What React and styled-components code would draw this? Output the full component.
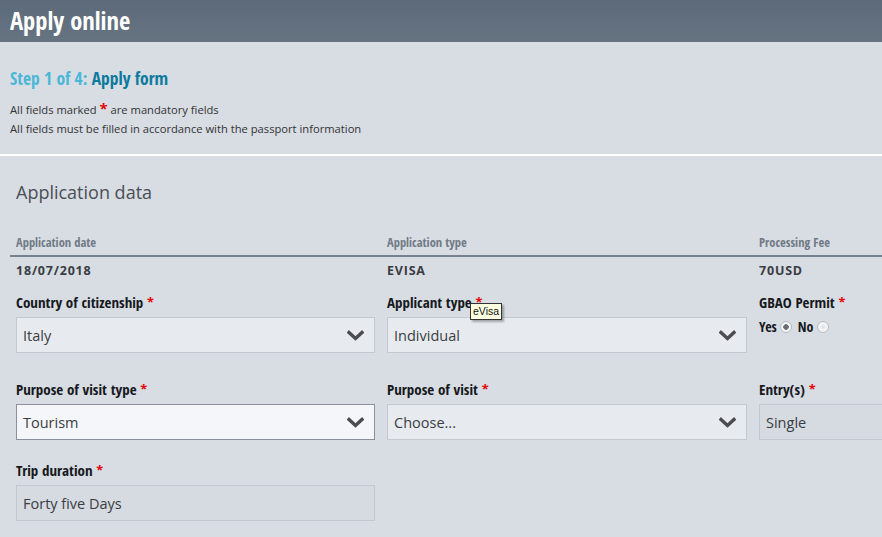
import React from "react";
import styled, { createGlobalStyle } from "styled-components";

const Global = createGlobalStyle`
  html, body { margin: 0; padding: 0; }
  body {
    background: #d8dce3;
    font-family: "Open Sans", "DejaVu Sans", sans-serif;
    overflow: hidden;
    width: 882px;
    height: 537px;
  }
`;

const cond = `"Liberation Sans Narrow", "Open Sans Condensed", "Open Sans", sans-serif`;

const Page = styled.div`
  width: 882px;
  overflow: hidden;
`;

const Header = styled.header`
  height: 42px;
  background: linear-gradient(#5d6a79, #667482);
  display: flex;
  align-items: center;
  padding-left: 10px;
  box-sizing: border-box;
`;

const Title = styled.h1`
  margin: 0;
  color: #fff;
  font-family: ${cond};
  font-weight: 700;
  font-size: 24.5px;
  margin-top: -2px;
`;

const Intro = styled.section`
  padding: 25px 10px 0;
  height: 114px;
  box-sizing: border-box;
  border-bottom: 2px solid #ffffff;
`;

const Step = styled.h2`
  margin: 0 0 10px;
  font-family: ${cond};
  font-weight: 700;
  font-size: 17.5px;
  color: #0b7a9c;
  line-height: 22px;
  span { color: #4bb7d7; }
`;

const Note = styled.p`
  margin: 0;
  font-size: 11.2px;
  line-height: 19px;
  color: #333;
`;

const Star = styled.span`
  color: #e20a0a;
  font-weight: 700;
  font-size: 15px;
`;

const Section = styled.section`
  padding: 24px 0 0 10px;
`;

const SectionTitle = styled.h3`
  margin: 0 0 31px 6px;
  font-weight: 400;
  font-size: 18px;
  color: #4a4f55;
  line-height: 24px;
`;

const MetaHead = styled.div`
  display: grid;
  grid-template-columns: 359px 360px 359px;
  column-gap: 12px;
  padding: 0 0 4px 6px;
  border-bottom: 2px solid #76828f;
`;

const MetaLabel = styled.div`
  font-family: ${cond};
  font-weight: 700;
  font-size: 12.5px;
  color: #707a86;
  line-height: 16px;
`;

const Grid = styled.div`
  display: grid;
  grid-template-columns: 359px 360px 359px;
  column-gap: 12px;
  padding-left: 6px;
`;

const MetaValue = styled.div`
  font-weight: 700;
  font-size: 12.5px;
  letter-spacing: 0.8px;
  color: #3a3d42;
  padding-top: 5px;
  height: 32px;
`;

const Field = styled.div`
  position: relative;
  height: ${(p) => p.$h || "87px"};
`;

const Label = styled.label`
  display: block;
  font-family: ${cond};
  font-weight: 700;
  font-size: 15px;
  color: #16191d;
  line-height: 17px;
  margin-bottom: 6px;
`;

const Box = styled.div`
  height: 36px;
  box-sizing: border-box;
  display: flex;
  align-items: center;
  justify-content: space-between;
  padding: 0 10px 0 6px;
  font-size: 14.5px;
  color: #3a3d42;
  background: ${(p) => (p.$focus ? "#f4f6f9" : p.$disabled ? "#d6dae1" : "#e7ebf0")};
  border: 1px solid ${(p) => (p.$focus ? "#8a919b" : "#c4c9d1")};
`;

const Chevron = () => (
  <svg width="17" height="11" viewBox="0 0 17 11">
    <path d="M2 2.5 L8.5 8.5 L15 2.5" fill="none" stroke="#4a4c50" strokeWidth="3.4" strokeLinecap="square" />
  </svg>
);

const Tooltip = styled.div`
  position: absolute;
  left: 83px;
  top: 9px;
  background: #ffffe1;
  border: 1px solid #333;
  box-shadow: 2px 2px 2px rgba(0, 0, 0, 0.3);
  font-family: "Liberation Sans", Arial, sans-serif;
  font-size: 10.5px;
  color: #111;
  padding: 1px 2px;
  line-height: 13px;
`;

const RadioRow = styled.div`
  display: flex;
  align-items: center;
  gap: 3px;
  font-family: ${cond};
  font-weight: 700;
  font-size: 14px;
  color: #16191d;
  margin-top: 2px;
`;

const Radio = styled.span`
  width: 12px;
  height: 12px;
  border-radius: 50%;
  box-sizing: border-box;
  border: 1px solid #b8bcc2;
  background: radial-gradient(circle, ${(p) => (p.$on ? "#6b6f75 0 2.5px" : "transparent 0 0")}, #f3f4f6 3px);
  margin-right: 3px;
`;

const Select = ({ value, focus }) => (
  <Box $focus={focus}>
    <span>{value}</span>
    <Chevron />
  </Box>
);

export default function App() {
  return (
    <Page>
      <Global />
      <Header>
        <Title>Apply online</Title>
      </Header>
      <Intro>
        <Step>
          <span>Step 1 of 4:</span> Apply form
        </Step>
        <Note>
          All fields marked <Star>*</Star> are mandatory fields
        </Note>
        <Note>All fields must be filled in accordance with the passport information</Note>
      </Intro>
      <Section>
        <SectionTitle>Application data</SectionTitle>
        <MetaHead>
          <MetaLabel>Application date</MetaLabel>
          <MetaLabel>Application type</MetaLabel>
          <MetaLabel>Processing Fee</MetaLabel>
        </MetaHead>
        <Grid>
          <MetaValue>18/07/2018</MetaValue>
          <MetaValue>EVISA</MetaValue>
          <MetaValue>70USD</MetaValue>

          <Field>
            <Label>
              Country of citizenship <Star>*</Star>
            </Label>
            <Select value="Italy" />
          </Field>
          <Field>
            <Label>
              Applicant type <Star>*</Star>
            </Label>
            <Select value="Individual" />
            <Tooltip>eVisa</Tooltip>
          </Field>
          <Field>
            <Label>
              GBAO Permit <Star>*</Star>
            </Label>
            <RadioRow>
              Yes <Radio $on /> No <Radio />
            </RadioRow>
          </Field>

          <Field $h="81px">
            <Label>
              Purpose of visit type <Star>*</Star>
            </Label>
            <Select value="Tourism" focus />
          </Field>
          <Field $h="81px">
            <Label>
              Purpose of visit <Star>*</Star>
            </Label>
            <Select value="Choose..." />
          </Field>
          <Field $h="81px">
            <Label>
              Entry(s) <Star>*</Star>
            </Label>
            <Box $disabled>
              <span>Single</span>
            </Box>
          </Field>

          <Field>
            <Label>
              Trip duration <Star>*</Star>
            </Label>
            <Box $disabled>
              <span>Forty five Days</span>
            </Box>
          </Field>
        </Grid>
      </Section>
    </Page>
  );
}
